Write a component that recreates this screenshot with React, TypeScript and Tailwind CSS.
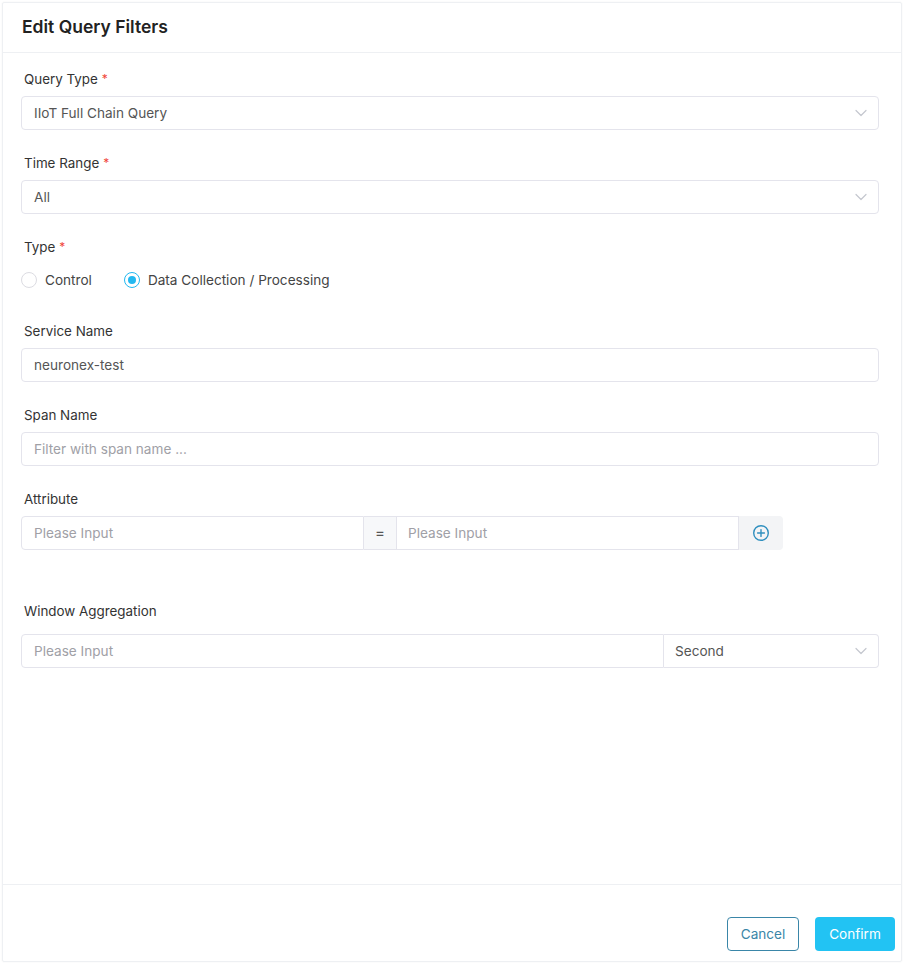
import React from "react";

const font = { fontFamily: "Inter, 'Noto Sans', 'Liberation Sans', sans-serif" };

const Chevron: React.FC = () => (
  <svg width="12" height="8" viewBox="0 0 12 8" fill="none" className="shrink-0">
    <path d="M1 1.5 6 6.5 11 1.5" stroke="#c4c7cf" strokeWidth="1.2" strokeLinecap="round" strokeLinejoin="round" />
  </svg>
);

const Label: React.FC<{ text: string; required?: boolean }> = ({ text, required }) => (
  <div className="flex h-[20px] items-center pl-[3px] text-[13.4px] text-[#333333]">
    {text}
    {required && <span className="ml-[4px] text-[12px] leading-none text-[#f0453a]">*</span>}
  </div>
);

const SelectBox: React.FC<{ value: string }> = ({ value }) => (
  <div className="flex h-[34px] items-center justify-between rounded-[4px] border border-[#e4e4ec] pl-[12px] pr-[11px] text-[13.6px] text-[#555555]">
    <span>{value}</span>
    <Chevron />
  </div>
);

const TextBox: React.FC<{ value?: string; placeholder?: string }> = ({ value, placeholder }) => (
  <div className="flex h-[34px] items-center rounded-[4px] border border-[#e4e4ec] px-[12px] text-[13.6px]">
    {value ? <span className="text-[#555555]">{value}</span> : <span className="text-[#a0a0a6]">{placeholder}</span>}
  </div>
);

const Radio: React.FC<{ label: string; checked?: boolean }> = ({ label, checked }) => (
  <div className="flex items-center gap-[8px]">
    {checked ? (
      <span className="flex h-[16px] w-[16px] items-center justify-center rounded-full border border-[#22b8f0]">
        <span className="h-[8px] w-[8px] rounded-full bg-[#22b8f0]" />
      </span>
    ) : (
      <span className="h-[16px] w-[16px] rounded-full border border-[#dcdce2]" />
    )}
    <span className="text-[13.6px] text-[#444444]">{label}</span>
  </div>
);

export default function App() {
  return (
    <div className="h-[963px] w-[904px] bg-white p-[2px]" style={font}>
      <div className="flex h-[960px] flex-col rounded-[2px] border border-[#eef0f3] shadow-[0_0_2px_rgba(0,0,0,0.06)]">
        <div className="flex h-[50px] items-center border-b border-[#eef0f3] px-[19px]">
          <h2 className="text-[17.5px] font-semibold text-[#222222]">Edit Query Filters</h2>
        </div>

        <div className="flex-1 pl-[18px] pr-[22px] pt-[16px]">
          <div className="mb-[23px]">
            <Label text="Query Type" required />
            <div className="mt-[7px]">
              <SelectBox value="IIoT Full Chain Query" />
            </div>
          </div>

          <div className="mb-[23px]">
            <Label text="Time Range" required />
            <div className="mt-[7px]">
              <SelectBox value="All" />
            </div>
          </div>

          <div className="mb-[25px]">
            <Label text="Type" required />
            <div className="mt-[7px] flex h-[32px] items-center gap-[32px]">
              <Radio label="Control" />
              <Radio label="Data Collection / Processing" checked />
            </div>
          </div>

          <div className="mb-[23px]">
            <Label text="Service Name" />
            <div className="mt-[7px]">
              <TextBox value="neuronex-test" />
            </div>
          </div>

          <div className="mb-[23px]">
            <Label text="Span Name" />
            <div className="mt-[7px]">
              <TextBox placeholder="Filter with span name ..." />
            </div>
          </div>

          <div className="mb-[51px]">
            <Label text="Attribute" />
            <div className="mt-[7px] flex h-[34px] w-[762px]">
              <div className="flex w-[343px] items-center rounded-l-[4px] border border-[#e4e4ec] px-[12px] text-[13.6px] text-[#a0a0a6]">
                Please Input
              </div>
              <div className="flex w-[32px] items-center justify-center border-y border-[#e4e4ec] bg-[#f7f8fa] text-[15px] text-[#555555]">
                =
              </div>
              <div className="flex w-[343px] items-center border border-[#e4e4ec] px-[11px] text-[13.6px] text-[#a0a0a6]">
                Please Input
              </div>
              <div className="flex w-[44px] items-center justify-center rounded-r-[4px] bg-[#f3f4f6]">
                <svg width="18" height="18" viewBox="0 0 18 18" fill="none">
                  <circle cx="9" cy="9" r="7.3" stroke="#2f8fbf" strokeWidth="1.4" />
                  <path d="M9 5.6v6.8M5.6 9h6.8" stroke="#2f8fbf" strokeWidth="1.4" strokeLinecap="round" />
                </svg>
              </div>
            </div>
          </div>

          <div>
            <Label text="Window Aggregation" />
            <div className="mt-[13px] flex h-[34px]">
              <div className="flex flex-1 items-center rounded-l-[4px] border border-[#e4e4ec] px-[12px] text-[13.6px] text-[#a0a0a6]">
                Please Input
              </div>
              <div className="flex w-[215px] items-center justify-between rounded-r-[4px] border border-l-0 border-[#e4e4ec] px-[11px] text-[13.6px] text-[#555555]">
                <span>Second</span>
                <Chevron />
              </div>
            </div>
          </div>
        </div>

        <div className="flex h-[77px] items-start justify-end gap-[16px] border-t border-[#eef0f3] pr-[6px] pt-[32px]">
          <button className="h-[34px] w-[72px] rounded-[4px] border border-[#3a86a8] bg-white text-[13.6px] text-[#3a86a8]">
            Cancel
          </button>
          <button className="h-[34px] w-[80px] rounded-[4px] bg-[#22c3f3] text-[13.6px] text-white">
            Confirm
          </button>
        </div>
      </div>
    </div>
  );
}
